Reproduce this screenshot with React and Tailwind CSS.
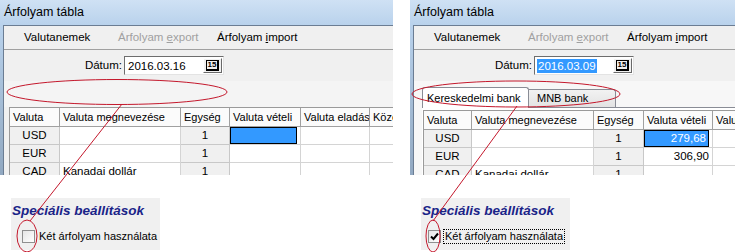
import React from "react";

const F = "font-['Liberation_Sans',Arial,sans-serif]";

function CalBtn() {
  return (
    <div className="absolute right-[1px] top-[1px] bottom-[1px] w-[19px] bg-[#f0f0f0] border border-t-white border-l-white border-r-[#696969] border-b-[#696969] flex items-center justify-center">
      <span className="border border-black border-r-2 border-b-2 text-[8px] font-bold leading-[8px] px-[1px] h-[11px] flex items-center">15</span>
    </div>
  );
}

function DateInput({ value, selected }) {
  return (
    <div className="relative w-[100px] h-[19px] bg-white border border-t-[#6d6d6d] border-l-[#6d6d6d] border-r-[#e3e3e3] border-b-[#e3e3e3] flex items-center pl-[2px]">
      <span className={`text-[11.5px] leading-[14px] px-[1px] ${selected ? "bg-[#3399ff] text-white" : "text-black"}`}>{value}</span>
      <CalBtn />
    </div>
  );
}

function Grid({ widths, headers, rows, selectedCol, width }) {
  return (
    <div className="overflow-hidden border-l border-t border-[#9a9a9a] bg-white" style={{ width }}>
      <div className="flex h-[19px]">
        {headers.map((h, i) => (
          <div key={i} style={{ width: widths[i] }} className="shrink-0 bg-[#fbfbfb] border-r border-b border-[#a0a0a0] text-[11px] leading-[18px] pl-[3px] whitespace-nowrap overflow-hidden">
            {h}
          </div>
        ))}
      </div>
      {rows.map((r, ri) => (
        <div key={ri} className="flex h-[18px]">
          {r.map((c, ci) => {
            const fixed = ci === 0 || ci === 2;
            const sel = ri === 0 && ci === selectedCol;
            return (
              <div
                key={ci}
                style={{ width: widths[ci] }}
                className={`shrink-0 text-[11.5px] leading-[17px] whitespace-nowrap overflow-hidden border-r border-b ${
                  fixed ? "bg-[#f0f0f0] border-[#c8c8c8] text-center" : "bg-white border-[#d4d4d4]"
                } ${ci === 1 ? "pl-[3px]" : ""} ${ci === 3 ? "text-right pr-[3px]" : ""}`}
              >
                {sel ? (
                  <div className="h-[17px] bg-[#3399ff] border border-black text-white text-right pr-[2px] leading-[15px]">{c}</div>
                ) : (
                  c
                )}
              </div>
            );
          })}
        </div>
      ))}
    </div>
  );
}

function Window({ width, date, dateSelected, tabs, grid }) {
  return (
    <div className="flex flex-col h-[175px] overflow-hidden shrink-0" style={{ width }}>
      <div className="h-[25px] shrink-0 bg-gradient-to-b from-[#cfe1f4] to-[#b9d2ec] pl-[4px] text-[12.5px] leading-[25px] text-black">
        Árfolyam tábla
      </div>
      <div className="flex flex-1 bg-gradient-to-b from-[#b9d2ec] to-[#8fa6bf]">
        <div className="w-[3px] shrink-0" />
        <div className="flex-1 flex flex-col bg-[#f0f0f0] border-l border-t border-[#6b7d93]">
          <div className="h-[24px] shrink-0 flex items-center text-[11.5px] border-b border-[#a0a0a0] pl-[20px] whitespace-nowrap">
            <span className="w-[94px]">Valutanemek</span>
            <span className="w-[99px] text-[#a0a0a0]">
              Árfolyam <span className="underline">e</span>xport
            </span>
            <span>
              Árfolyam <span className="underline">i</span>mport
            </span>
          </div>
          <div className="h-[31px] shrink-0 flex items-start pt-[6px]">
            <span className="w-[118px] text-right text-[11.5px] leading-[19px]">Dátum:</span>
            <span className="ml-[2px]">
              <DateInput value={date} selected={dateSelected} />
            </span>
          </div>
          {tabs ? (
            <div className="flex-1 flex flex-col pl-[8px] bg-[#f7f7f7]">
              <div className="h-[26px] flex items-end whitespace-nowrap">
                <div className="h-[21px] w-[107px] bg-white border border-b-0 border-[#898c95] rounded-t-[3px] text-[11px] leading-[20px] pl-[4px] relative top-[1px]">
                  Kereskedelmi bank
                </div>
                <div className="h-[18px] w-[87px] bg-gradient-to-b from-[#f2f2f2] to-[#e3e3e3] border border-b-0 border-l-0 border-[#898c95] rounded-tr-[3px] text-[11px] leading-[17px] pl-[8px]">
                  MNB bank
                </div>
              </div>
              <div className="flex-1 border-t border-[#898c95] bg-white pt-[2px] pl-[1px]">{grid}</div>
            </div>
          ) : (
            <div className="flex-1 flex flex-col">
              <div className="h-[26px] bg-[#f4f4f4]" />
              <div className="flex-1 pl-[5px]">{grid}</div>
            </div>
          )}
        </div>
      </div>
    </div>
  );
}

function Checkbox({ checked }) {
  return (
    <div className="w-[13px] h-[13px] shrink-0 border border-[#8f8f8f] bg-gradient-to-br from-[#e6e6e6] to-white flex items-center justify-center">
      {checked && (
        <svg width="9" height="9" viewBox="0 0 9 9">
          <path d="M1 4.5 L3.5 7 L8 1.5" fill="none" stroke="#000" strokeWidth="2" />
        </svg>
      )}
    </div>
  );
}

function Special({ checked, width, indent }) {
  return (
    <div className="h-[52px] bg-[#f0f0f0] pt-[5px] pl-[1px] whitespace-nowrap" style={{ width }}>
      <div className="text-[13.5px] leading-[16px] font-bold italic text-[#1a2488]">Speciális beállítások</div>
      <div className="flex items-center mt-[10px]" style={{ paddingLeft: indent }}>
        <Checkbox checked={checked} />
        <span className={`ml-[2px] text-[11px] leading-[13px] px-[1px] ${checked ? "border border-dotted border-black" : "border border-transparent"}`}>
          Két árfolyam használata
        </span>
      </div>
    </div>
  );
}

export default function App() {
  const leftGrid = (
    <Grid
      width={384}
      widths={[50, 121, 49, 71, 69, 60]}
      headers={["Valuta", "Valuta megnevezése", "Egység", "Valuta vételi", "Valuta eladás", "Középárfolyam"]}
      rows={[
        ["USD", "", "1", "", "", ""],
        ["EUR", "", "1", "", "", ""],
        ["CAD", "Kanadai dollár", "1", "", "", ""],
      ]}
      selectedCol={3}
    />
  );
  const rightGrid = (
    <Grid
      width={312}
      widths={[48, 122, 50, 69, 60]}
      headers={["Valuta", "Valuta megnevezése", "Egység", "Valuta vételi", "Valuta eladás"]}
      rows={[
        ["USD", "", "1", "279,68", ""],
        ["EUR", "", "1", "306,90", ""],
        ["CAD", "Kanadai dollár", "1", "", ""],
      ]}
      selectedCol={3}
    />
  );
  return (
    <div className={`${F} relative w-[738px] h-[252px] bg-white overflow-hidden text-black`}>
      <div className="flex">
        <div className="flex flex-col">
          <Window width={393} date="2016.03.16" grid={leftGrid} />
          <div className="pl-[11px] pt-[23px]">
            <Special width={149} indent={10} />
          </div>
        </div>
        <div className="flex flex-col ml-[17px]">
          <Window width={325} date="2016.03.09" dateSelected tabs grid={rightGrid} />
          <div className="pl-[11px] pt-[23px]">
            <Special width={149} checked indent={6} />
          </div>
        </div>
      </div>
      <svg className="absolute inset-0 pointer-events-none" width="738" height="252" viewBox="0 0 738 252">
        <g fill="none" stroke="#c4182c" strokeWidth="1">
          <ellipse cx="117" cy="92" rx="110" ry="12.5" />
          <line x1="122" y1="104" x2="30" y2="221" />
          <ellipse cx="27" cy="236" rx="10" ry="16" />
          <ellipse cx="516" cy="94" rx="104" ry="13" />
          <line x1="517" y1="106" x2="433" y2="221" />
          <ellipse cx="433" cy="236" rx="7" ry="16" />
        </g>
      </svg>
    </div>
  );
}
